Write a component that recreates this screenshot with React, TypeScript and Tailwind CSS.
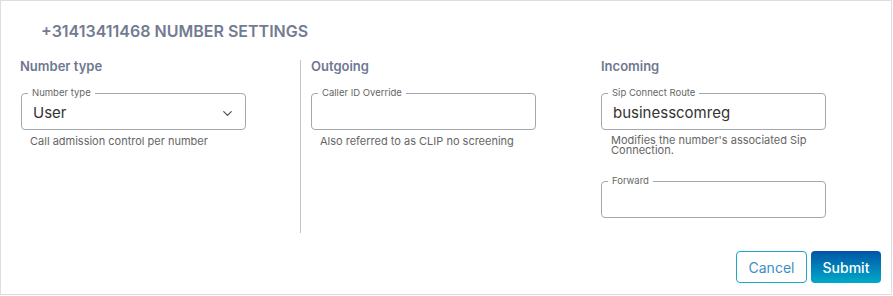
import { ChevronDown } from "lucide-react";

function Field({
  label,
  value,
  select,
}: {
  label: string;
  value?: string;
  select?: boolean;
}) {
  return (
    <div className="relative w-[225px] h-[37px] rounded-[4px] border border-[#a3a7ae] flex items-center pl-[11px] pr-[10px]">
      <span className="absolute -top-[7px] left-[6px] bg-white px-[4px] text-[9.5px] leading-[12px] text-[#666]">
        {label}
      </span>
      <span className="flex-1 text-[15px] text-[#333] pt-[3px]">{value}</span>
      {select && <ChevronDown size={15} strokeWidth={2} className="text-[#555] mt-[3px]" />}
    </div>
  );
}

export default function App() {
  return (
    <div
      className="w-[892px] h-[295px] border border-[#dedede] bg-white flex flex-col"
      style={{ fontFamily: "Inter, 'Noto Sans', sans-serif" }}
    >
      <h1 className="pl-[40px] pt-[20px] text-[16px] font-semibold text-[#737b91] leading-[20px]">
        +31413411468 NUMBER SETTINGS
      </h1>

      <div className="grid grid-cols-[291px_290px_290px] pl-[9px] pt-[19px]">
        <div className="border-r border-[#c4c4c4] pl-[10px] h-[173px]">
          <h2 className="text-[13px] font-semibold text-[#6e7891] leading-[16px] -mt-[2px]">
            Number type
          </h2>
          <div className="mt-[19px] ml-[1px]">
            <Field label="Number type" value="User" select />
          </div>
          <p className="mt-[5px] pl-[10px] text-[11px] text-[#666] leading-[13px]">
            Call admission control per number
          </p>
        </div>

        <div className="pl-[10px]">
          <h2 className="text-[13px] font-semibold text-[#6e7891] leading-[16px] -mt-[2px]">
            Outgoing
          </h2>
          <div className="mt-[19px]">
            <Field label="Caller ID Override" />
          </div>
          <p className="mt-[5px] pl-[9px] text-[11px] text-[#666] leading-[13px]">
            Also referred to as CLIP no screening
          </p>
        </div>

        <div className="pl-[10px]">
          <h2 className="text-[13px] font-semibold text-[#6e7891] leading-[16px] -mt-[2px]">
            Incoming
          </h2>
          <div className="mt-[19px]">
            <Field label="Sip Connect Route" value="businesscomreg" />
          </div>
          <p className="mt-[5px] pl-[10px] w-[225px] text-[11px] text-[#666] leading-[10px]">
            Modifies the number's associated Sip Connection.
          </p>
          <div className="mt-[26px]">
            <Field label="Forward" />
          </div>
        </div>
      </div>

      <div className="flex justify-end gap-[4px] pr-[10px] mt-[18px]">
        <button className="w-[71px] h-[32px] rounded-[4px] border border-[#1fa7c6] text-[#3a8fc0] text-[14px]">
          Cancel
        </button>
        <button className="w-[70px] h-[32px] rounded-[4px] bg-gradient-to-b from-[#0055a6] to-[#02aac8] text-white text-[14px] font-medium">
          Submit
        </button>
      </div>
    </div>
  );
}
